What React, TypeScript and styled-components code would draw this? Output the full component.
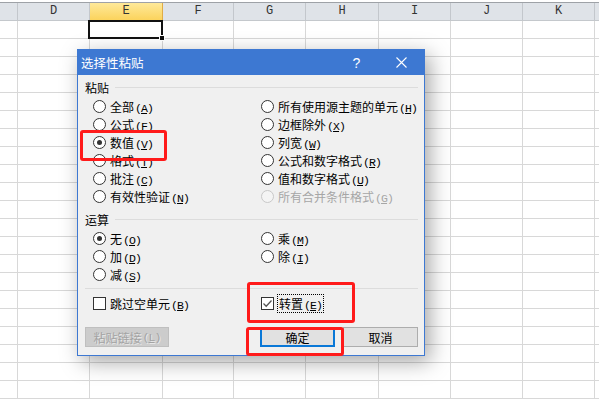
import React from 'react'
import styled, { createGlobalStyle } from 'styled-components'

const GlobalStyle = createGlobalStyle`
  html, body {
    margin: 0;
    padding: 0;
    background: #fff;
  }
  * {
    box-sizing: border-box;
  }
`

const COLS = [
  { label: '', width: 18 },
  { label: 'D', width: 72 },
  { label: 'E', width: 73 },
  { label: 'F', width: 71 },
  { label: 'G', width: 72 },
  { label: 'H', width: 73 },
  { label: 'I', width: 72 },
  { label: 'J', width: 72 },
  { label: 'K', width: 72 },
  { label: '', width: 30 },
]

const ROW_COUNT = 22

const Sheet = styled.div`
  position: relative;
  width: 599px;
  height: 399px;
  overflow: hidden;
  background: #fff;
  font-family: 'Noto Sans CJK SC', 'Noto Sans', sans-serif;
`

const HeaderRow = styled.div`
  display: flex;
  margin-top: 2px;
  height: 19px;
  border-top: 1px solid #9ea2a7;
  border-bottom: 1px solid #c4c8cc;
  background: #dfe3e8;
`

const HeaderCell = styled.div<{ $w: number; $active?: boolean }>`
  flex: 0 0 ${({ $w }) => $w}px;
  border-right: 1px solid ${({ $active }) => ($active ? '#e0ac45' : '#c3c7cc')};
  background: ${({ $active }) => ($active ? 'linear-gradient(#fee99a, #fbd35c)' : 'transparent')};
  font-family: 'Liberation Mono', 'DejaVu Sans Mono', monospace;
  font-size: 12px;
  line-height: 17px;
  text-align: center;
  color: #333;
`

const Row = styled.div`
  display: flex;
  height: 18px;
  border-bottom: 1px solid #d8d8d8;
`

const Cell = styled.div<{ $w: number }>`
  flex: 0 0 ${({ $w }) => $w}px;
  border-right: 1px solid #d8d8d8;
`

const Selection = styled.div`
  position: absolute;
  left: 88px;
  top: 20px;
  width: 75px;
  height: 19px;
  border: 2px solid #111;
`

const FillHandle = styled.div`
  position: absolute;
  right: -4px;
  bottom: -4px;
  width: 6px;
  height: 6px;
  background: #111;
  border: 1px solid #fff;
`

const Dialog = styled.div`
  position: absolute;
  left: 77px;
  top: 49px;
  width: 348px;
  height: 307px;
  display: flex;
  flex-direction: column;
  border: 1px solid #3d78d2;
  background: #f0f0f0;
  box-shadow: 5px 6px 20px rgba(0, 0, 0, 0.35);
  font-size: 12px;
  color: #000;
`

const TitleBar = styled.div`
  display: flex;
  align-items: center;
  height: 25px;
  background: #3d78d2;
  color: #fff;
  padding-left: 3px;
`

const Title = styled.div`
  flex: 1;
  font-size: 12.5px;
`

const TitleButton = styled.div`
  width: 45px;
  height: 25px;
  display: flex;
  align-items: center;
  justify-content: center;
  font-size: 14px;
  font-family: 'Liberation Sans', sans-serif;
`

const Body = styled.div`
  display: flex;
  flex-direction: column;
  padding: 4px 6px 0 7px;
`

const GroupHeader = styled.div<{ $mt?: number }>`
  display: flex;
  align-items: center;
  height: 16px;
  margin-top: ${({ $mt }) => $mt || 0}px;
  margin-bottom: 2px;
  &::after {
    content: '';
    flex: 1;
    height: 1px;
    margin-left: 6px;
    background: #dcdcdc;
  }
`

const OptionGrid = styled.div`
  display: grid;
  grid-template-columns: 168px 1fr;
  grid-auto-rows: 18px;
  padding-left: 8px;
`

const Option = styled.div<{ $disabled?: boolean }>`
  display: flex;
  align-items: center;
  gap: 4px;
  color: ${({ $disabled }) => ($disabled ? '#a6a6a6' : '#000')};
  white-space: nowrap;
`

const Radio = styled.span<{ $checked?: boolean; $disabled?: boolean }>`
  position: relative;
  width: 13px;
  height: 13px;
  border-radius: 50%;
  border: 1px solid ${({ $disabled }) => ($disabled ? '#c8c8c8' : '#333')};
  background: ${({ $disabled }) => ($disabled ? '#f4f4f4' : '#fff')};
  flex-shrink: 0;
  &::after {
    content: '';
    display: ${({ $checked }) => ($checked ? 'block' : 'none')};
    position: absolute;
    left: 3px;
    top: 3px;
    width: 5px;
    height: 5px;
    border-radius: 50%;
    background: #333;
  }
`

const Box = styled.span`
  display: flex;
  align-items: center;
  justify-content: center;
  width: 13px;
  height: 13px;
  border: 1px solid #333;
  background: #fff;
  flex-shrink: 0;
`

const FocusText = styled.span`
  outline: 1px dotted #000;
  outline-offset: 0;
  padding: 0 1px;
`

const AccessKey = styled.span`
  font-family: 'Liberation Mono', 'DejaVu Sans Mono', monospace;
  font-size: 11.5px;
  letter-spacing: -0.9px;
  margin-left: 1px;
`

const Separator = styled.div`
  height: 1px;
  background: #dcdcdc;
  margin: 5px 0 5px;
`

const ButtonRow = styled.div`
  display: grid;
  grid-template-columns: 175px 75px 75px;
  margin-top: 15px;
`

const Button = styled.div<{ $variant?: 'default' | 'primary' | 'disabled'; $ml?: number }>`
  height: 20px;
  display: flex;
  align-items: center;
  justify-content: center;
  margin-left: ${({ $ml }) => $ml || 0}px;
  width: ${({ $variant }) => ($variant === 'disabled' ? '84px' : '75px')};
  background: ${({ $variant }) => ($variant === 'disabled' ? '#cccccc' : '#e1e1e1')};
  border: ${({ $variant }) =>
    $variant === 'primary' ? '2px solid #0a78d7' : $variant === 'disabled' ? '1px solid #bfbfbf' : '1px solid #adadad'};
  color: ${({ $variant }) => ($variant === 'disabled' ? '#a3a3a3' : '#000')};
  text-shadow: ${({ $variant }) => ($variant === 'disabled' ? '1px 1px 0 #e8e8e8' : 'none')};
`

const Mark = styled.div<{ $x: number; $y: number; $w: number; $h: number }>`
  position: absolute;
  left: ${({ $x }) => $x}px;
  top: ${({ $y }) => $y}px;
  width: ${({ $w }) => $w}px;
  height: ${({ $h }) => $h}px;
  border: 3px solid #ff1a1a;
  border-radius: 3px;
`

const Key: React.FC<{ k: string }> = ({ k }) => (
  <AccessKey>
    (<u>{k}</u>)
  </AccessKey>
)

const CloseIcon = () => (
  <svg width="11" height="11" viewBox="0 0 11 11">
    <path d="M0.5 0.5 L10.5 10.5 M10.5 0.5 L0.5 10.5" stroke="#fff" strokeWidth="1.1" />
  </svg>
)

const CheckIcon = () => (
  <svg width="11" height="11" viewBox="0 0 11 11">
    <path d="M1.5 5.5 L4.2 8.2 L9.5 2.5" stroke="#555" strokeWidth="1.3" fill="none" />
  </svg>
)

const pasteOptions: [string, string, boolean?, boolean?][] = [
  ['全部', 'A'],
  ['所有使用源主题的单元', 'H'],
  ['公式', 'F'],
  ['边框除外', 'X'],
  ['数值', 'V', true],
  ['列宽', 'W'],
  ['格式', 'T'],
  ['公式和数字格式', 'R'],
  ['批注', 'C'],
  ['值和数字格式', 'U'],
  ['有效性验证', 'N'],
  ['所有合并条件格式', 'G', false, true],
]

const opOptions: [string, string, boolean?][] = [
  ['无', 'O', true],
  ['乘', 'M'],
  ['加', 'D'],
  ['除', 'I'],
  ['减', 'S'],
]

const App: React.FC = () => {
  return (
    <Sheet>
      <GlobalStyle />
      <HeaderRow>
        {COLS.map((c, i) => (
          <HeaderCell key={i} $w={c.width} $active={c.label === 'E'}>
            {c.label}
          </HeaderCell>
        ))}
      </HeaderRow>
      {Array.from({ length: ROW_COUNT }).map((_, r) => (
        <Row key={r}>
          {COLS.map((c, i) => (
            <Cell key={i} $w={c.width} />
          ))}
        </Row>
      ))}
      <Selection>
        <FillHandle />
      </Selection>

      <Dialog>
        <TitleBar>
          <Title>选择性粘贴</Title>
          <TitleButton>?</TitleButton>
          <TitleButton>
            <CloseIcon />
          </TitleButton>
        </TitleBar>
        <Body>
          <GroupHeader>粘贴</GroupHeader>
          <OptionGrid>
            {pasteOptions.map(([text, k, checked, disabled]) => (
              <Option key={text} $disabled={disabled}>
                <Radio $checked={checked} $disabled={disabled} />
                <span>
                  {text}
                  <Key k={k} />
                </span>
              </Option>
            ))}
          </OptionGrid>
          <GroupHeader $mt={6}>运算</GroupHeader>
          <OptionGrid>
            {opOptions.map(([text, k, checked]) => (
              <Option key={text}>
                <Radio $checked={checked} />
                <span>
                  {text}
                  <Key k={k} />
                </span>
              </Option>
            ))}
          </OptionGrid>
          <Separator />
          <OptionGrid>
            <Option>
              <Box />
              <span>
                跳过空单元
                <Key k="B" />
              </span>
            </Option>
            <Option>
              <Box>
                <CheckIcon />
              </Box>
              <FocusText>
                转置
                <Key k="E" />
              </FocusText>
            </Option>
          </OptionGrid>
          <ButtonRow>
            <Button $variant="disabled">
              粘贴链接
              <Key k="L" />
            </Button>
            <Button $variant="primary">确定</Button>
            <Button $ml={8}>取消</Button>
          </ButtonRow>
        </Body>
      </Dialog>

      <Mark $x={80} $y={130} $w={87} $h={31} />
      <Mark $x={247} $y={282} $w={108} $h={41} />
      <Mark $x={246} $y={327} $w={98} $h={29} />
    </Sheet>
  )
}

export default App
